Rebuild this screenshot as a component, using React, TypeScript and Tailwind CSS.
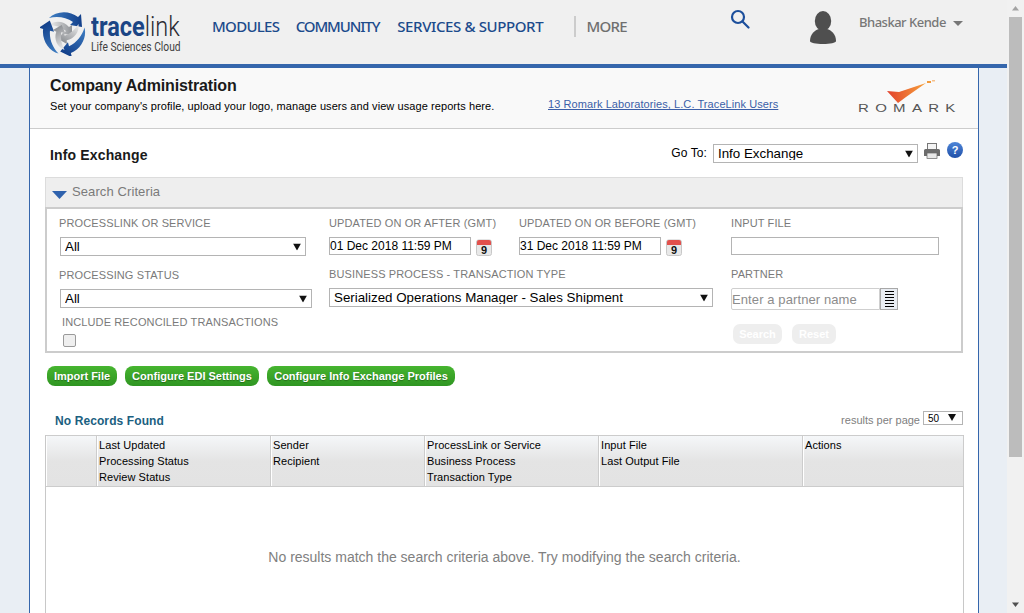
const arial = 'font-["Liberation_Sans",Arial,sans-serif]';

function LogoSwirl() {
    const angles = [0, 120, 240];
    return (
        <svg width="48" height="46" viewBox="0 0 48 46" className="shrink-0">
            <defs>
                <linearGradient id="swirlBlue" x1="0" y1="0" x2="1" y2="0">
                    <stop offset="0" stopColor="#3f7fc4" />
                    <stop offset="1" stopColor="#123f8a" />
                </linearGradient>
                <linearGradient id="swirlGrey" x1="0" y1="0" x2="1" y2="0">
                    <stop offset="0" stopColor="#f0f0f0" />
                    <stop offset="1" stopColor="#8f9296" />
                </linearGradient>
            </defs>
            {angles.map((a) => (
                <g key={a} transform={`rotate(${a} 24 23)`}>
                    <path d="M9 8 C16 1 29 0 38 7 L41 4 L42 17 L30 15 L33 12 C26 7 17 6 9 8 Z" fill="url(#swirlBlue)" />
                    <path d="M9 15 C15 10 24 11 29 17 L32 15 L32 25 L23 24 L26 21 C21 17 15 15 9 15 Z" fill="url(#swirlGrey)" />
                </g>
            ))}
        </svg>
    );
}

function CalendarIcon() {
    return (
        <svg width="16" height="17" viewBox="0 0 16 17" className="shrink-0">
            <rect x="0.5" y="1" width="15" height="15.5" rx="2" fill="#e8e8e8" stroke="#c8c8c8" />
            <path d="M1 3a2 2 0 0 1 2-2h10a2 2 0 0 1 2 2v3H1z" fill="#e2504c" />
            <text x="8" y="14.5" textAnchor="middle" fontSize="11" fontWeight="700" fill="#111" fontFamily="Liberation Sans">9</text>
        </svg>
    );
}

function Label({ children, className = '' }: { children: React.ReactNode; className?: string }) {
    return <div className={`text-[11px] leading-[14px] tracking-[0.12px] text-[#7a7a7a] uppercase ${className}`}>{children}</div>;
}

function Select({ value, className = '' }: { value: string; className?: string }) {
    return (
        <div className={`relative ${className}`}>
            <select
                defaultValue={value}
                className="block h-full w-full appearance-none rounded-none border border-[#b4b4b4] bg-white pl-1 text-[13.33px] leading-none text-black outline-none"
            >
                <option>{value}</option>
            </select>
            <svg width="8" height="7" viewBox="0 0 8 7" className="pointer-events-none absolute top-1/2 right-[5px] -translate-y-1/2">
                <path d="M0 0h8L4 7z" fill="#111" />
            </svg>
        </div>
    );
}

function DateField({ value }: { value: string }) {
    return (
        <div className="mt-[7px] flex items-start gap-[5px]">
            <input
                readOnly
                value={value}
                className="h-[18px] w-[142px] border border-[#b4b4b4] bg-white text-[12px] text-black outline-none"
            />
            <div className="mt-[2px]">
                <CalendarIcon />
            </div>
        </div>
    );
}

function GreenButton({ children, className = '' }: { children: React.ReactNode; className?: string }) {
    return (
        <button className={`flex h-[20px] items-center justify-center rounded-[8px] bg-gradient-to-b from-[#46b52f] to-[#2f9522] text-[11px] font-bold text-white [text-shadow:0_1px_1px_rgba(0,0,0,0.3)] ${className}`}>
            {children}
        </button>
    );
}

function HeaderCell({ lines, className = '' }: { lines: string[]; className?: string }) {
    return (
        <div className={`border-r border-l border-r-[#cccccc] border-l-white pt-[1px] pl-[1px] text-[11px] leading-[16px] tracking-[0.07px] text-black ${className}`}>
            {lines.map((l) => (
                <div key={l}>{l}</div>
            ))}
        </div>
    );
}

export default function App() {
    return (
        <div className={`flex h-[613px] w-[1024px] overflow-hidden bg-[#e9eef4] ${arial}`}>
            <div className="flex w-[1007px] flex-col">
                {/* Top nav */}
                <header className="flex h-[68px] shrink-0 border-b-4 border-[#3566ac] bg-[#f0f0f0]">
                    <div className="mt-[10px] ml-[40px] flex h-[46px] w-[172px] items-start">
                        <LogoSwirl />
                        <div className="mt-[4px] ml-[3px] w-[88px]">
                            <div className="origin-left scale-x-[.84] font-['Roboto'] text-[28px] leading-[25px] whitespace-nowrap text-[#2b2b33]">
                                <span className="font-bold text-[#1b4585]">trace</span>
                                <span className="font-light">link</span>
                            </div>
                            <div className="origin-left scale-x-[.76] font-['Roboto'] text-[13.5px] leading-[14px] whitespace-nowrap text-[#3f3f3f]">
                                Life Sciences Cloud
                            </div>
                        </div>
                    </div>
                    <nav className="mt-[16px] flex h-[21px] w-[415px] shrink-0 items-center font-['Noto_Sans'] text-[15px] font-medium text-[#1c4b8c]">
                        <span className="w-[84px] tracking-[-0.7px]">MODULES</span>
                        <span className="w-[101px] tracking-[-1.1px]">COMMUNITY</span>
                        <span className="w-[178px] pl-px tracking-[-0.38px] whitespace-nowrap">SERVICES &amp; SUPPORT</span>
                        <span className="ml-px h-[21px] w-[2px] bg-[#cccccc]" />
                        <span className="ml-[10px] tracking-[-0.7px] text-[#6f6f6f]">MORE</span>
                    </nav>
                    <svg width="20" height="20" viewBox="0 0 20 20" className="mt-[9px] ml-[103px] shrink-0" fill="none" stroke="#1c4f9c" strokeWidth="2.2">
                        <circle cx="8" cy="8" r="6" />
                        <path d="M12.5 12.5 L18.5 18.5" strokeLinecap="round" />
                    </svg>
                    <svg width="28" height="33" viewBox="0 0 28 33" className="mt-[11px] ml-[59px] shrink-0" fill="#4f4f4f">
                        <ellipse cx="14" cy="10" rx="8.2" ry="10" />
                        <path d="M1 30c0-7 5-11 9-12h8c4 1 9 5 9 12 0 2-6 3-13 3S1 32 1 30z" />
                    </svg>
                    <div className="mt-[13px] ml-[22px] flex h-[19px] items-center font-['Noto_Sans'] text-[13px] font-medium tracking-[-0.5px] whitespace-nowrap text-[#777777]">
                        Bhaskar Kende
                        <svg width="10" height="5" viewBox="0 0 10 5" className="mt-[1px] ml-[7px]">
                            <path d="M0 0h10L5 5z" fill="#777777" />
                        </svg>
                    </div>
                </header>

                <div className="flex min-h-0 flex-1 pr-[28px] pl-[29px]">
                    <main className="flex w-[950px] flex-col border-x border-[#3566ac] bg-white">
                        {/* Company heading */}
                        <section className="flex h-[61px] shrink-0 border-b border-[#cccccc] bg-[#f9f9f9] pl-[20px]">
                            <div className="w-[498px] pt-[8px]">
                                <h1 className="text-[16px] leading-[19px] font-bold tracking-[-0.14px] text-[#1a1a1a]">Company Administration</h1>
                                <p className="mt-[4px] text-[11px] leading-[14px] tracking-[0.08px] text-black">
                                    Set your company's profile, upload your logo, manage users and view usage reports here.
                                </p>
                            </div>
                            <a className="mt-[29px] h-[14px] text-[11px] leading-[14px] tracking-[0.08px] whitespace-nowrap text-[#3b5fa8] underline">
                                13 Romark Laboratories, L.C. TraceLink Users
                            </a>
                            <div className="relative mt-[10px] ml-[80px] w-[98px]">
                                <svg width="76" height="36" viewBox="0 0 76 36" className="absolute top-0 left-[16px]">
                                    <defs>
                                        <linearGradient id="romarkMark" x1="0" y1="0" x2="1" y2="0">
                                            <stop offset="0" stopColor="#e2412c" />
                                            <stop offset="1" stopColor="#f7a23c" />
                                        </linearGradient>
                                    </defs>
                                    <path d="M13 13 L25 14 L52 5 L32 19 L24 25 Z" fill="url(#romarkMark)" />
                                    <rect x="53" y="3" width="4" height="2" fill="#f29a3a" />
                                    <rect x="58" y="2" width="3" height="1.5" fill="#f7c08a" />
                                </svg>
                                <div className="absolute top-[25px] left-0 origin-left scale-x-[1.5] text-[10px] leading-[12px] tracking-[4.2px] whitespace-nowrap text-[#555555]">ROMARK</div>
                            </div>
                        </section>

                        {/* Title row */}
                        <section className="flex h-[48px] shrink-0 pr-[15px] pl-[20px]">
                            <h2 className="mt-[18px] text-[14px] leading-[17px] font-bold tracking-[0.15px] text-[#1a1a1a]">Info Exchange</h2>
                            <div className="ml-auto flex items-start">
                                <span className="mt-[16px] mr-[6px] text-[12px] leading-[17px] tracking-[0.1px] text-black">Go To:</span>
                                <Select value="Info Exchange" className="mt-[15px] h-[19px] w-[205px]" />
                                <svg width="16" height="16" viewBox="0 0 16 16" className="mt-[14px] ml-[6px]" fill="#6c6c6c">
                                    <rect x="3.5" y="0.5" width="9" height="6" fill="#f4f4f4" stroke="#777" />
                                    <path d="M1.5 6h13a1.5 1.5 0 0 1 1.5 1.5V13H0V7.5A1.5 1.5 0 0 1 1.5 6z" />
                                    <rect x="3" y="10" width="10" height="5.5" fill="#e8e8e8" stroke="#666" strokeWidth="0.7" />
                                </svg>
                                <div className="mt-[13px] ml-[7px] flex h-[16px] w-[16px] items-center justify-center rounded-full bg-gradient-to-b from-[#4f86d8] to-[#1f4fa8] text-[11px] font-bold text-white">?</div>
                            </div>
                        </section>

                        {/* Search criteria */}
                        <section className="ml-[15px] w-[918px] shrink-0">
                            <div className="flex h-[30px] items-center border border-b-0 border-[#dcdcdc] bg-[#eeeeee] pb-[2px] pl-[6px] text-[#7a7a7a]">
                                <svg width="15" height="8" viewBox="0 0 15 8" className="mt-[6px] shrink-0">
                                    <path d="M0 0h15L7.5 8z" fill="#2f62ad" />
                                </svg>
                                <span className="ml-[5px] text-[13px] leading-none tracking-[0.1px]">Search Criteria</span>
                            </div>
                            <div className="flex h-[146px] border-2 border-[#cccccc] bg-white pl-[12px]">
                                <div className="w-[270px] pt-[7px]">
                                    <Label>ProcessLink or Service</Label>
                                    <Select value="All" className="mt-[7px] ml-px h-[19px] w-[246px]" />
                                    <Label className="mt-[12px]">Processing Status</Label>
                                    <Select value="All" className="mt-[7px] ml-px h-[19px] w-[252px]" />
                                    <Label className="mt-[7px] ml-[3px]">Include Reconciled Transactions</Label>
                                    <input type="checkbox" className="mt-[5px] ml-[4px] block h-[13px] w-[13px] appearance-none rounded-[2px] border border-[#9a9a9a] bg-[#efefef]" />
                                </div>
                                <div className="w-[402px] pt-[7px]">
                                    <div className="flex">
                                        <div className="w-[190px]">
                                            <Label>Updated on or after (GMT)</Label>
                                            <DateField value="01 Dec 2018 11:59 PM" />
                                        </div>
                                        <div>
                                            <Label>Updated on or before (GMT)</Label>
                                            <DateField value="31 Dec 2018 11:59 PM" />
                                        </div>
                                    </div>
                                    <Label className="mt-[11px]">Business Process - Transaction Type</Label>
                                    <Select value="Serialized Operations Manager - Sales Shipment" className="mt-[7px] h-[19px] w-[384px]" />
                                </div>
                                <div className="pt-[7px]">
                                    <Label>Input File</Label>
                                    <input readOnly className="mt-[7px] block h-[18px] w-[208px] border border-[#b4b4b4] bg-white outline-none" />
                                    <Label className="mt-[12px]">Partner</Label>
                                    <div className="mt-[7px] flex h-[22px]">
                                        <input
                                            readOnly
                                            placeholder="Enter a partner name"
                                            className="h-full w-[149px] rounded-l-[2px] border border-[#cfcfcf] bg-white text-[13px] tracking-[0.1px] outline-none placeholder:text-[#8c8c8c]"
                                        />
                                        <div className="flex h-full w-[18px] flex-col items-center justify-center gap-[2px] border border-[#a8a8a8] bg-[#e9edf3]">
                                            {[0, 1, 2, 3, 4, 5].map((i) => (
                                                <span key={i} className="h-px w-[9px] bg-black" />
                                            ))}
                                        </div>
                                    </div>
                                    <div className="mt-[14px] ml-[2px] flex gap-[10px] text-[11px] font-bold text-white [text-shadow:0_0_1px_#999]">
                                        <button className="h-[20px] w-[49px] rounded-[7px] bg-[#eeeeee]">Search</button>
                                        <button className="h-[20px] w-[44px] rounded-[7px] bg-[#eeeeee]">Reset</button>
                                    </div>
                                </div>
                            </div>
                        </section>

                        <div className="mt-[13px] ml-[17px] flex shrink-0 gap-[8px]">
                            <GreenButton className="w-[70px]">Import File</GreenButton>
                            <GreenButton className="w-[134px]">Configure EDI Settings</GreenButton>
                            <GreenButton className="w-[188px]">Configure Info Exchange Profiles</GreenButton>
                        </div>

                        {/* Results */}
                        <div className="mt-[25px] ml-[25px] flex h-[24px] w-[908px] shrink-0">
                            <h3 className="mt-[2px] text-[12px] leading-[16px] font-bold tracking-[0.1px] text-[#1b6080]">No Records Found</h3>
                            <div className="ml-auto flex items-start">
                                <span className="mt-[2px] mr-[3px] text-[11px] leading-[14px] text-[#808080]">results per page</span>
                                <div className="relative flex h-[14px] w-[40px] items-center border border-[#b4b4b4] bg-white pl-[4px] text-[10px] text-black">
                                    50
                                    <svg width="8" height="7" viewBox="0 0 8 7" className="absolute top-[2px] right-[6px]">
                                        <path d="M0 0h8L4 7z" fill="#111" />
                                    </svg>
                                </div>
                            </div>
                        </div>

                        <section className="ml-[15px] flex min-h-0 w-[919px] flex-1 flex-col border-x border-[#c8c8c8]">
                            <div className="grid h-[52px] shrink-0 grid-cols-[51px_174px_154px_174px_204px_161px] border-y border-[#cccccc] bg-gradient-to-b from-[#f5f7f9] via-[#e4e4e4] to-[#e3e3e3]">
                                <HeaderCell lines={[]} />
                                <HeaderCell lines={['Last Updated', 'Processing Status', 'Review Status']} />
                                <HeaderCell lines={['Sender', 'Recipient']} />
                                <HeaderCell lines={['ProcessLink or Service', 'Business Process', 'Transaction Type']} />
                                <HeaderCell lines={['Input File', 'Last Output File']} />
                                <HeaderCell lines={['Actions']} />
                            </div>
                            <div className="flex-1 pt-[62px] text-center text-[14px] leading-[16px] text-[#808080]">
                                No results match the search criteria above. Try modifying the search criteria.
                            </div>
                        </section>
                    </main>
                </div>
            </div>

            {/* Scrollbar */}
            <div className="flex w-[17px] shrink-0 flex-col items-center bg-[#f1f1f1]">
                <svg width="9" height="17" viewBox="0 0 9 17" className="shrink-0">
                    <path d="M1 10.5 L4.5 6 L8 10.5z" fill="#a3a3a3" />
                </svg>
                <div className="h-[440px] w-[13px] shrink-0 bg-[#bcbcbc]" />
                <svg width="9" height="17" viewBox="0 0 9 17" className="mt-auto shrink-0">
                    <path d="M1 6.5 L8 6.5 L4.5 11z" fill="#505050" />
                </svg>
            </div>
        </div>
    );
}
